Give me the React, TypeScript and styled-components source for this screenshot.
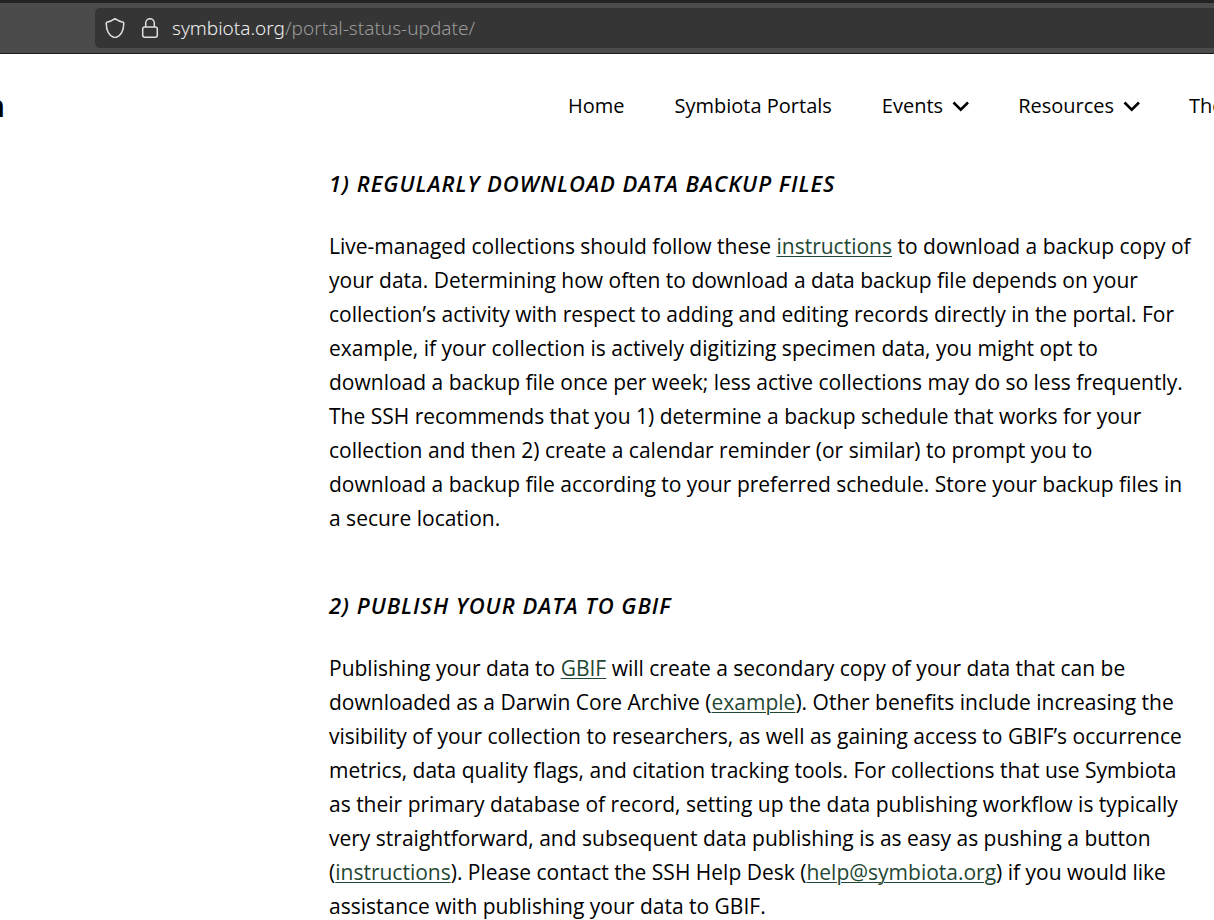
import React from "react";
import styled, { createGlobalStyle } from "styled-components";

const GlobalStyle = createGlobalStyle`
  * { box-sizing: border-box; }
  html, body { margin: 0; }
  body {
    background: #fff;
    color: #000;
    font-family: "Open Sans", "Noto Sans", sans-serif;
    overflow: hidden;
  }
`;

const BrowserBar = styled.div`
  display: flex;
  height: 54px;
  padding: 5px 0 5px 95px;
  background: #4b4b4b;
  border-top: 3px solid #232323;
  border-bottom: 1px solid #1c1c1c;
`;

const AddressField = styled.div`
  flex: 1;
  display: flex;
  align-items: center;
  height: 40px;
  padding-left: 10px;
  background: #353535;
  border-radius: 5px 0 0 5px;
  color: #f0f0f0;
`;

const BarIcon = styled.svg`
  flex: none;
  width: 20px;
  height: 20px;
  margin-right: 15px;
  fill: none;
  stroke: #dfdfdf;
  stroke-width: 1.5;
  stroke-linejoin: round;
`;

const Address = styled.div`
  margin-left: -3px;
  font: 350 19px/24px "Noto Sans", sans-serif;
  white-space: nowrap;
`;

const AddressPath = styled.span`
  color: #9a9a9a;
`;

const Header = styled.header`
  display: flex;
  align-items: center;
  height: 104px;
`;

const SiteTitle = styled.a`
  display: flex;
  justify-content: flex-end;
  width: 5px;
  overflow: hidden;
  color: #000;
  font-size: 30px;
  font-weight: 700;
  line-height: 40px;
  text-decoration: none;
`;

const Nav = styled.nav`
  flex: 1;
  display: flex;
  gap: 50px;
  padding-left: 563px;
  overflow: hidden;
  white-space: nowrap;
`;

const NavLink = styled.a`
  display: flex;
  flex: none;
  align-items: center;
  gap: 10px;
  color: #000;
  font-size: 20px;
  line-height: 28px;
  text-decoration: none;
`;

const Chevron = styled.svg`
  width: 15px;
  height: 10px;
  fill: none;
  stroke: #000;
  stroke-width: 2.6;
  overflow: visible;
`;

const Article = styled.main`
  padding: 9px 20px 0 329px;
`;

const Section = styled.section`
  margin-bottom: 54px;
`;

const Heading = styled.h2`
  margin: 0 0 30px;
  font-size: 22px;
  font-style: italic;
  font-weight: 600;
  line-height: 32px;
  letter-spacing: 1px;
  text-transform: uppercase;
`;

const Paragraph = styled.p`
  margin: 0;
  font-size: 21px;
  line-height: 34px;
`;

const TextLink = styled.a`
  color: #1f4733;
  text-decoration: underline;
  text-decoration-thickness: 1px;
  text-underline-offset: 2px;
`;

const Arrow = () => (
  <Chevron viewBox="0 0 15 10" aria-hidden="true">
    <path d="M.5 1.500 7.750 8.700 15 1.500" />
  </Chevron>
);

export default function App() {
  return (
    <>
      <GlobalStyle />
      <BrowserBar>
        <AddressField>
          <BarIcon viewBox="0 0 20 20" aria-hidden="true">
            <path d="M10 .7C7.500 2.500 5 3.600 2 4.200Q1.200 4.400 1.200 5.200C1.400 12 3.500 17.300 8.600 19.200q1.400.6 2.800 0C16.500 17.300 18.600 12 18.800 5.200q0-.8-.8-1C15 3.600 12.500 2.500 10 .7Z" />
          </BarIcon>
          <BarIcon viewBox="0 0 20 20" aria-hidden="true">
            <rect x="2.700" y="9" width="14.600" height="10.200" rx="2" />
            <path d="M5.700 9V5a4.300 4.300 0 0 1 8.600 0v4" />
          </BarIcon>
          <Address>
            symbiota.org<AddressPath>/portal-status-update/</AddressPath>
          </Address>
        </AddressField>
      </BrowserBar>
      <Header>
        <SiteTitle href="#home">n</SiteTitle>
        <Nav>
          <NavLink href="#home">Home</NavLink>
          <NavLink href="#portals">Symbiota Portals</NavLink>
          <NavLink href="#events">Events<Arrow /></NavLink>
          <NavLink href="#resources">Resources<Arrow /></NavLink>
          <NavLink href="#the">The</NavLink>
        </Nav>
      </Header>
      <Article>
        <Section>
          <Heading>1) Regularly download data backup files</Heading>
          <Paragraph>
            Live-managed collections should follow these <TextLink href="#backup">instructions</TextLink> to
            download a backup copy of your data. Determining how often to download a data backup file depends
            on your collection’s activity with respect to adding and editing records directly in the portal.
            For example, if your collection is actively digitizing specimen data, you might opt to download a
            backup file once per week; less active collections may do so less frequently. The SSH recommends
            that you 1) determine a backup schedule that works for your collection and then 2) create a
            calendar reminder (or similar) to prompt you to download a backup file according to your preferred
            schedule. Store your backup files in a secure location.
          </Paragraph>
        </Section>
        <Section>
          <Heading>2) Publish your data to GBIF</Heading>
          <Paragraph>
            Publishing your data to <TextLink href="#gbif">GBIF</TextLink> will create a secondary copy of
            your data that can be downloaded as a Darwin Core Archive (<TextLink href="#example">example</TextLink>).
            Other benefits include increasing the visibility of your collection to researchers, as well as
            gaining access to GBIF’s occurrence metrics, data quality flags, and citation tracking tools. For
            collections that use Symbiota as their primary database of record, setting up the data publishing
            workflow is typically very straightforward, and subsequent data publishing is as easy as pushing a
            button (<TextLink href="#publish">instructions</TextLink>). Please contact the SSH Help Desk
            (<TextLink href="mailto:help@symbiota.org">help@symbiota.org</TextLink>) if you would like
            assistance with publishing your data to GBIF.
          </Paragraph>
        </Section>
      </Article>
    </>
  );
}
